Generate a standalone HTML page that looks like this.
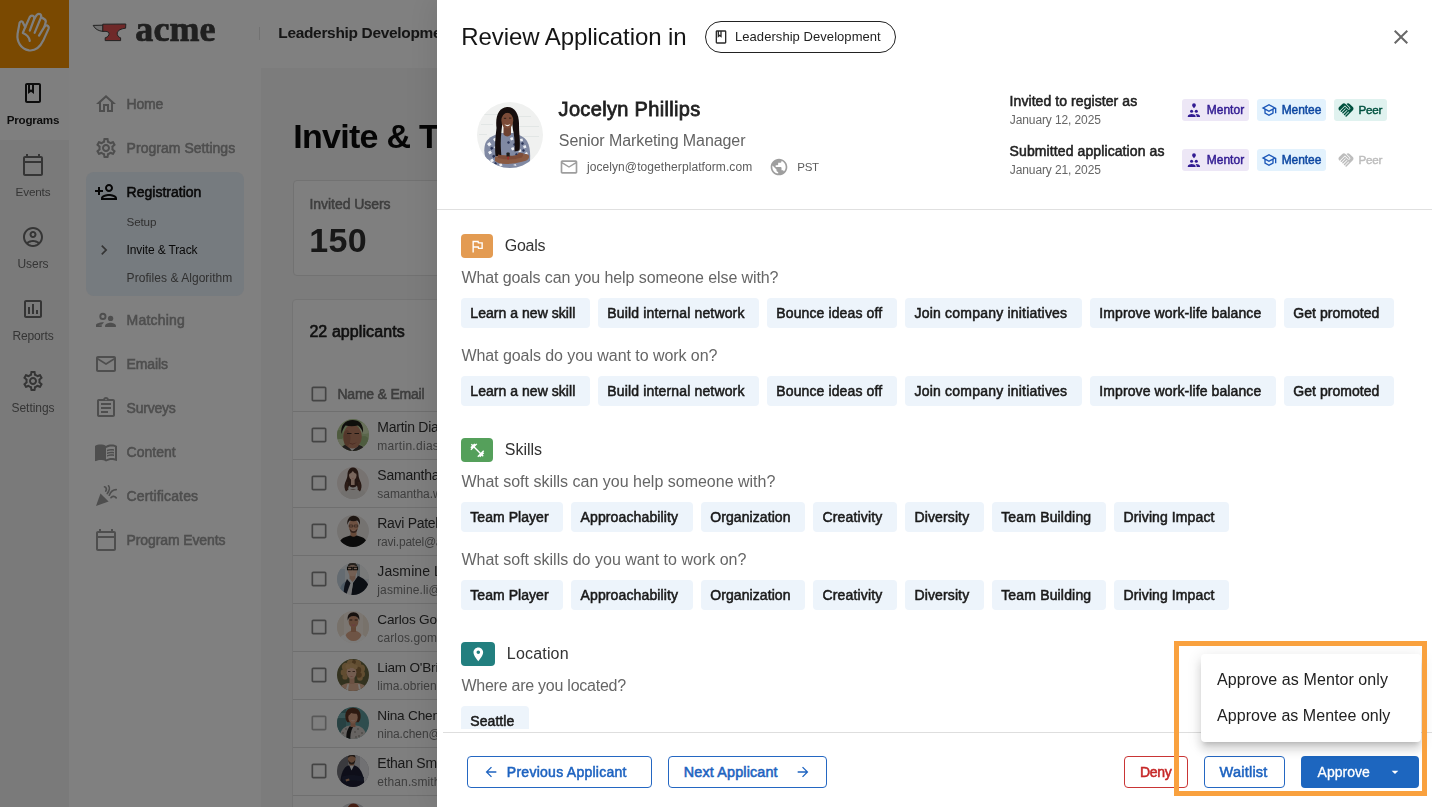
<!DOCTYPE html>
<html lang="en"><head><meta charset="utf-8"><title>Review Application</title>
<style>
html,body{margin:0;padding:0}
body{width:1432px;height:807px;overflow:hidden;position:relative;background:#fff;font-family:"Liberation Sans",sans-serif;-webkit-font-smoothing:antialiased}
.a{position:absolute;display:block;box-sizing:border-box}
.t{position:absolute;white-space:nowrap;display:block}
.m{-webkit-text-stroke:0.038em currentColor}
.b{font-weight:bold}
#app{position:absolute;left:0;top:0;width:1432px;height:807px;overflow:hidden;background:#fff}
#overlay{position:absolute;left:0;top:0;width:1432px;height:807px;background:rgba(0,0,0,.5)}
#modal{position:absolute;left:437px;top:0;width:995px;height:807px;background:#fff;box-shadow:0 0 30px 4px rgba(0,0,0,.09)}
#modal .t,#modal .a{}
.chip{position:absolute;height:30px;border-radius:4px;background:#edf4fb;box-sizing:border-box}
#root{position:absolute;left:0;top:0;width:1432px;height:807px;overflow:hidden;opacity:.999}

</style></head>
<body>
<div id="root">
<div class="a" style="left:260.8px;top:68px;width:1172px;height:739px;background:#f8f8f8;"></div>
<aside id="rail">
<div class="a" style="left:0px;top:0px;width:69px;height:807px;background:#f5f5f5;"></div>
<div class="a" style="left:0px;top:68px;width:69px;height:72px;background:#ffffff;"></div>
<div class="a" style="left:0px;top:0px;width:69px;height:68px;background:#f59300;"></div>
<svg class="a" style="left:0;top:0" width="69" height="68" viewBox="0 0 69 68" fill="none" stroke="#ffffff" stroke-width="2.2" stroke-linecap="round" stroke-linejoin="round"><path d="M25.2 27.2 L22.4 21.6 Q20.6 20.6 19.6 22.8 L17.6 33.6 C16.6 41.4 20.6 49 29 50.4 C36 51.200 40.400 46.400 43.200 40.600 L48.600 28.600 Q49.200 26.200 47.200 25.400 Q45.400 25 44.400 26.800 L39 35.600"/><path d="M25.2 27.200 L29.600 17.400 Q30.800 15.200 32.800 15.800 Q34.800 16.800 34.200 19 L29.800 30.600"/><path d="M34.200 19 L36.400 15.400 Q37.800 13.400 39.800 14 Q41.800 15 41 17.400 L34.600 32.800"/><path d="M41 17.400 Q42.800 18 44.200 19 Q46.400 20.400 45.600 22.600 L44.400 26.800"/><path d="M25.2 27.200 L22.800 33 C26.600 34.400 29.200 37.200 29.800 41"/></svg>
<svg class="a" style="left:21px;top:81px;" width="24" height="24" viewBox="0 0 24 24"><path fill="#1a1a1a" d="M18 2H6c-1.1 0-2 .9-2 2v16c0 1.1.9 2 2 2h12c1.1 0 2-.9 2-2V4c0-1.1-.9-2-2-2zM9 4h2v5l-1-.75L9 9V4zm9 16H6V4h1v9l3-2.25L13 13V4h5v16z"/></svg>
<span id="t1" class="t b" style="left:6.70px;top:114.00px;font-size:11.63px;line-height:11.63px;color:#1a1a1a;letter-spacing:-0.214px;">Programs</span>
<svg class="a" style="left:21px;top:153px;" width="24" height="24" viewBox="0 0 24 24"><path fill="#6a6a6a" d="M20 3h-1V1h-2v2H7V1H5v2H4c-1.1 0-2 .9-2 2v16c0 1.1.9 2 2 2h16c1.1 0 2-.9 2-2V5c0-1.1-.9-2-2-2zm0 18H4V10h16v11zm0-13H4V5h16v3z"/></svg>
<span id="t2" class="t" style="left:15.60px;top:186.00px;font-size:11.69px;line-height:11.69px;color:#6a6a6a;letter-spacing:-0.157px;">Events</span>
<svg class="a" style="left:21px;top:225px;" width="24" height="24" viewBox="0 0 24 24"><path fill="#6a6a6a" d="M12 2C6.48 2 2 6.48 2 12s4.48 10 10 10 10-4.48 10-10S17.52 2 12 2zM7.350 18.500C8.660 17.560 10.260 17 12 17s3.340.56 4.650 1.500c-1.310.94-2.910 1.500-4.650 1.500s-3.340-.56-4.650-1.500zm10.790-1.380C16.450 15.800 14.320 15 12 15s-4.450.8-6.140 2.120C4.700 15.730 4 13.950 4 12c0-4.420 3.580-8 8-8s8 3.580 8 8c0 1.950-.7 3.730-1.860 5.120zM12 6c-1.930 0-3.500 1.570-3.500 3.500S10.070 13 12 13s3.500-1.570 3.500-3.500S13.930 6 12 6zm0 5c-.83 0-1.500-.67-1.500-1.500S11.170 8 12 8s1.500.67 1.500 1.500S12.830 11 12 11z"/></svg>
<span id="t3" class="t" style="left:17.50px;top:258.00px;font-size:12.00px;line-height:12.00px;color:#6a6a6a;letter-spacing:-0.069px;">Users</span>
<svg class="a" style="left:21px;top:297px;" width="24" height="24" viewBox="0 0 24 24"><path fill="#6a6a6a" d="M19 3H5c-1.1 0-2 .9-2 2v14c0 1.1.9 2 2 2h14c1.1 0 2-.9 2-2V5c0-1.1-.9-2-2-2zm0 16H5V5h14v14zM7 10h2v7H7zm4-3h2v10h-2zm4 6h2v4h-2z"/></svg>
<span id="t4" class="t" style="left:12.50px;top:330.00px;font-size:12.00px;line-height:12.00px;color:#6a6a6a;letter-spacing:-0.147px;">Reports</span>
<svg class="a" style="left:21px;top:369px;" width="24" height="24" viewBox="0 0 24 24"><path fill="#6a6a6a" d="M19.43 12.98c.04-.32.07-.64.07-.98 0-.34-.03-.66-.07-.98l2.11-1.65c.19-.15.24-.42.12-.64l-2-3.46c-.09-.16-.26-.25-.44-.25-.06 0-.12.01-.17.03l-2.49 1c-.52-.4-1.08-.73-1.69-.98l-.38-2.65C14.46 2.18 14.25 2 14 2h-4c-.25 0-.46.18-.49.42l-.38 2.65c-.61.25-1.17.59-1.69.98l-2.49-1c-.06-.02-.12-.03-.18-.03-.17 0-.34.09-.43.25l-2 3.46c-.13.22-.07.49.12.64l2.11 1.65c-.04.32-.07.65-.07.98 0 .33.03.66.07.98l-2.11 1.65c-.19.15-.24.42-.12.64l2 3.46c.09.16.26.25.44.25.06 0 .12-.01.17-.03l2.49-1c.52.4 1.08.73 1.69.98l.38 2.65c.03.24.24.42.49.42h4c.25 0 .46-.18.49-.42l.38-2.65c.61-.25 1.17-.59 1.69-.98l2.49 1c.06.02.12.03.18.03.17 0 .34-.09.43-.25l2-3.46c.12-.22.07-.49-.12-.64l-2.11-1.65zm-1.98-1.71c.04.31.05.52.05.73 0 .21-.02.43-.05.73l-.14 1.13.89.7 1.08.84-.7 1.21-1.27-.51-1.04-.42-.9.68c-.43.32-.84.56-1.25.73l-1.06.43-.16 1.13-.2 1.35h-1.4l-.19-1.35-.16-1.13-1.06-.43c-.43-.18-.83-.41-1.23-.71l-.91-.7-1.06.43-1.27.51-.7-1.21 1.08-.84.89-.7-.14-1.13c-.03-.31-.05-.54-.05-.74s.02-.43.05-.73l.14-1.13-.89-.7-1.08-.84.7-1.21 1.27.51 1.04.42.9-.68c.43-.32.84-.56 1.25-.73l1.06-.43.16-1.13.2-1.35h1.39l.19 1.35.16 1.13 1.06.43c.43.18.83.41 1.23.71l.91.7 1.06-.43 1.27-.51.7 1.21-1.07.85-.89.7.14 1.13zM12 8c-2.21 0-4 1.79-4 4s1.79 4 4 4 4-1.79 4-4-1.79-4-4-4zm0 6c-1.1 0-2-.9-2-2s.9-2 2-2 2 .9 2 2-.9 2-2 2z"/></svg>
<span id="t5" class="t" style="left:11.50px;top:402.00px;font-size:12.00px;line-height:12.00px;color:#6a6a6a;letter-spacing:-0.045px;">Settings</span>
</aside>
<header id="topbar">
<svg class="a" style="left:92px;top:22px" width="36" height="20" viewBox="0 0 36 20"><path d="M1.2 3.4 L11 3.200 L11 9.400 C6.500 9 3 7 1.200 3.400 Z" fill="#e2e2e2" stroke="#444" stroke-width="1"/><path d="M10.800 2.200 L33.800 2 L33.600 6.200 C29 6.600 25.600 8.600 25.200 11 C25 13.400 26.400 15.400 28.600 15.800 L28.600 18.600 L13.200 18.600 L13.200 15.800 C16 15.200 17.200 13.200 17 11.200 C16.600 9.400 14 9.200 10.800 9.400 Z" fill="#de5252" stroke="#444" stroke-width="1" stroke-linejoin="round"/></svg>
<span id="t6" class="t b" style="left:135.30px;top:11.00px;font-size:36.00px;line-height:36.00px;color:#404040;letter-spacing:0.087px;font-family:'Liberation Serif',serif;-webkit-text-stroke:0.7px #404040;">acme</span>
<div class="a" style="left:258.5px;top:27px;width:1px;height:13px;background:#e4e4e4;"></div>
<span id="t7" class="t b" style="left:278.30px;top:25.00px;font-size:15.44px;line-height:15.44px;color:#2c2c2c;letter-spacing:-0.302px;">Leadership Development</span>
</header>
<nav id="program-nav">
<svg class="a" style="left:94px;top:92px;" width="24" height="24" viewBox="0 0 24 24"><path fill="#9c9c9c" d="M12 5.69l5 4.5V18h-2v-6H9v6H7v-7.81l5-4.5M12 3L2 12h3v8h6v-6h2v6h6v-8h3L12 3z"/></svg>
<span id="t8" class="t m" style="left:126.60px;top:97.00px;font-size:14.00px;line-height:14.00px;color:#9c9c9c;letter-spacing:-0.240px;">Home</span>
<svg class="a" style="left:94px;top:136px;" width="24" height="24" viewBox="0 0 24 24"><path fill="#9c9c9c" d="M19.43 12.98c.04-.32.07-.64.07-.98 0-.34-.03-.66-.07-.98l2.11-1.65c.19-.15.24-.42.12-.64l-2-3.46c-.09-.16-.26-.25-.44-.25-.06 0-.12.01-.17.03l-2.49 1c-.52-.4-1.08-.73-1.69-.98l-.38-2.65C14.46 2.18 14.25 2 14 2h-4c-.25 0-.46.18-.49.42l-.38 2.65c-.61.25-1.17.59-1.69.98l-2.49-1c-.06-.02-.12-.03-.18-.03-.17 0-.34.09-.43.25l-2 3.46c-.13.22-.07.49.12.64l2.11 1.65c-.04.32-.07.65-.07.98 0 .33.03.66.07.98l-2.11 1.65c-.19.15-.24.42-.12.64l2 3.46c.09.16.26.25.44.25.06 0 .12-.01.17-.03l2.49-1c.52.4 1.08.73 1.69.98l.38 2.65c.03.24.24.42.49.42h4c.25 0 .46-.18.49-.42l.38-2.65c.61-.25 1.17-.59 1.69-.98l2.49 1c.06.02.12.03.18.03.17 0 .34-.09.43-.25l2-3.46c.12-.22.07-.49-.12-.64l-2.11-1.65zm-1.98-1.71c.04.31.05.52.05.73 0 .21-.02.43-.05.73l-.14 1.13.89.7 1.08.84-.7 1.21-1.27-.51-1.04-.42-.9.68c-.43.32-.84.56-1.25.73l-1.06.43-.16 1.13-.2 1.35h-1.4l-.19-1.35-.16-1.13-1.06-.43c-.43-.18-.83-.41-1.23-.71l-.91-.7-1.06.43-1.27.51-.7-1.21 1.08-.84.89-.7-.14-1.13c-.03-.31-.05-.54-.05-.74s.02-.43.05-.73l.14-1.13-.89-.7-1.08-.84.7-1.21 1.27.51 1.04.42.9-.68c.43-.32.84-.56 1.25-.73l1.06-.43.16-1.13.2-1.35h1.39l.19 1.35.16 1.13 1.06.43c.43.18.83.41 1.23.71l.91.7 1.06-.43 1.27-.51.7 1.21-1.07.85-.89.7.14 1.13zM12 8c-2.21 0-4 1.79-4 4s1.79 4 4 4 4-1.79 4-4-1.79-4-4-4zm0 6c-1.1 0-2-.9-2-2s.9-2 2-2 2 .9 2 2-.9 2-2 2z"/></svg>
<span id="t9" class="t m" style="left:126.60px;top:141.00px;font-size:14.00px;line-height:14.00px;color:#9c9c9c;letter-spacing:0.027px;">Program Settings</span>
<div class="a" style="left:86px;top:172px;width:158px;height:124px;background:#edf6fe;border-radius:8px;"></div>
<svg class="a" style="left:94px;top:180px" width="24" height="24" viewBox="0 0 24 24"><g transform="translate(24,0) scale(-1,1)"><path fill="#0c0c0c" d="M13 8c0-2.21-1.79-4-4-4S5 5.79 5 8s1.79 4 4 4 4-1.79 4-4zm-2 0c0 1.1-.9 2-2 2s-2-.9-2-2 .9-2 2-2 2 .9 2 2zM1 18v2h16v-2c0-2.66-5.33-4-8-4s-8 1.34-8 4zm2 0c.2-.71 3.3-2 6-2 2.690 0 5.780 1.280 6 2H3zm17-3v-3h3v-2h-3V7h-2v3h-3v2h3v3h2z"/></g></svg>
<span id="t10" class="t m" style="left:126.60px;top:185.00px;font-size:14.00px;line-height:14.00px;color:#111;letter-spacing:0.008px;">Registration</span>
<span id="t11" class="t" style="left:126.60px;top:216.00px;font-size:11.68px;line-height:11.68px;color:#616161;letter-spacing:-0.166px;">Setup</span>
<svg class="a" style="left:93.7px;top:240.3px;" width="20" height="20" viewBox="0 0 24 24"><path fill="#6a6a6a" d="M10 6L8.590 7.410 13.170 12l-4.580 4.590L10 18l6-6z"/></svg>
<span id="t12" class="t" style="left:126.60px;top:244.00px;font-size:12.00px;line-height:12.00px;color:#111;letter-spacing:-0.136px;">Invite &amp; Track</span>
<span id="t13" class="t" style="left:126.60px;top:272.00px;font-size:12.00px;line-height:12.00px;color:#616161;letter-spacing:0.049px;">Profiles &amp; Algorithm</span>
<svg class="a" style="left:94px;top:308px" width="24" height="24" viewBox="0 0 24 24"><circle cx="8.900" cy="8.400" r="2.600" fill="none" stroke="#9c9c9c" stroke-width="1.900"/><path d="M2 19v-1.900c0-1.700 3.400-2.700 8-2.900l-1.900 2.200c-1.700.200-3 .500-3.600.900h3.400l-.300 1.700z" fill="#9c9c9c"/><circle cx="16.600" cy="10.400" r="2.650" fill="#9c9c9c"/><path d="M11.100 19v-1.300c0-2 3.400-3 5.400-3s5.400 1 5.400 3V19z" fill="#9c9c9c"/></svg>
<span id="t14" class="t m" style="left:126.60px;top:313.00px;font-size:14.00px;line-height:14.00px;color:#9c9c9c;letter-spacing:0.198px;">Matching</span>
<svg class="a" style="left:94px;top:352px;" width="24" height="24" viewBox="0 0 24 24"><path fill="#9c9c9c" d="M20 4H4c-1.1 0-1.99.9-1.99 2L2 18c0 1.1.9 2 2 2h16c1.1 0 2-.9 2-2V6c0-1.1-.9-2-2-2zm0 14H4V8l8 5 8-5v10zm-8-7L4 6h16l-8 5z"/></svg>
<span id="t15" class="t m" style="left:126.60px;top:357.00px;font-size:14.00px;line-height:14.00px;color:#9c9c9c;letter-spacing:-0.119px;">Emails</span>
<svg class="a" style="left:94px;top:396px;" width="24" height="24" viewBox="0 0 24 24"><path fill="#9c9c9c" d="M7 15h7v2H7zm0-4h10v2H7zm0-4h10v2H7zm12-4h-4.18C14.4 1.84 13.3 1 12 1c-1.3 0-2.4.84-2.82 2H5c-.14 0-.27.01-.4.04-.39.08-.74.28-1.01.55-.18.18-.33.4-.43.64-.1.23-.16.49-.16.77v14c0 .27.06.54.16.78s.25.45.43.64c.27.27.62.47 1.01.55.13.02.26.03.4.03h14c1.1 0 2-.9 2-2V5c0-1.1-.9-2-2-2zm-7-.25c.41 0 .75.34.75.75s-.34.75-.75.75-.75-.34-.75-.75.34-.75.75-.75zM19 19H5V5h14v14z"/></svg>
<span id="t16" class="t m" style="left:126.60px;top:401.00px;font-size:14.00px;line-height:14.00px;color:#9c9c9c;letter-spacing:-0.225px;">Surveys</span>
<svg class="a" style="left:94px;top:440px;" width="24" height="24" viewBox="0 0 24 24"><path fill="#9c9c9c" d="M21 5c-1.11-.35-2.33-.5-3.5-.5-1.95 0-4.05.4-5.5 1.5-1.45-1.1-3.55-1.5-5.5-1.5S2.450 4.9 1 6v14.650c0 .25.25.5.5.5.1 0 .15-.05.25-.05C3.1 20.450 5.050 20 6.500 20c1.950 0 4.050.4 5.500 1.500 1.350-.85 3.800-1.500 5.500-1.500 1.650 0 3.350.3 4.750 1.050.1.050.15.050.25.050.25 0 .5-.25.5-.5V6c-.6-.45-1.250-.75-2-1zm0 13.500c-1.1-.35-2.3-.5-3.500-.5-1.700 0-4.150.65-5.500 1.500V8c1.350-.85 3.800-1.500 5.500-1.500 1.200 0 2.400.15 3.500.5v11.500z M17.5 10.500c.88 0 1.730.09 2.500.26V9.240c-.79-.15-1.640-.24-2.500-.24-1.700 0-3.240.29-4.500.83v1.660c1.130-.64 2.700-.99 4.500-.99zM13 12.490v1.660c1.130-.64 2.700-.99 4.500-.99.88 0 1.730.09 2.500.26V11.900c-.79-.15-1.640-.24-2.500-.24-1.700 0-3.240.3-4.500.83zM17.5 14.330c-1.700 0-3.240.29-4.500.83v1.660c1.130-.64 2.700-.99 4.500-.99.88 0 1.730.09 2.500.26v-1.520c-.79-.16-1.640-.24-2.500-.24z"/></svg>
<span id="t17" class="t m" style="left:126.60px;top:445.00px;font-size:14.00px;line-height:14.00px;color:#9c9c9c;letter-spacing:-0.007px;">Content</span>
<svg class="a" style="left:94px;top:484px" width="24" height="24" viewBox="0 0 24 24"><path d="M2 22l12.600-4.500L6.500 9.400z" fill="#9c9c9c"/><g fill="none" stroke="#9c9c9c" stroke-width="1.700" stroke-linecap="round"><path d="M10.500 2.800c1.800.6 2.500 2.600 1.300 4.200"/><path d="M14.500 1.800c1.600 1.800.8 5.200-1.200 7.700"/><path d="M15.300 11.200c1.200-3 3.600-5.600 6.900-5.600"/><path d="M17 13.600c1.600-1.400 3.800-1.300 5.200.3"/></g></svg>
<span id="t18" class="t m" style="left:126.60px;top:489.00px;font-size:14.00px;line-height:14.00px;color:#9c9c9c;letter-spacing:0.131px;">Certificates</span>
<svg class="a" style="left:94px;top:528px;" width="24" height="24" viewBox="0 0 24 24"><path fill="#9c9c9c" d="M20 3h-1V1h-2v2H7V1H5v2H4c-1.1 0-2 .9-2 2v16c0 1.1.9 2 2 2h16c1.1 0 2-.9 2-2V5c0-1.1-.9-2-2-2zm0 18H4V10h16v11zm0-13H4V5h16v3z"/></svg>
<span id="t19" class="t m" style="left:126.60px;top:533.00px;font-size:14.00px;line-height:14.00px;color:#9c9c9c;letter-spacing:-0.120px;">Program Events</span>
</nav>
<main id="content">
<span id="t20" class="t b" style="left:293.30px;top:119.00px;font-size:34.00px;line-height:34.00px;color:#0a0a0a;letter-spacing:-0.722px;">Invite &amp; Track</span>
<div class="a" style="left:293px;top:180px;width:300px;height:96px;background:#fff;border:1px solid #e4e4e4;border-radius:4px;"></div>
<span id="t21" class="t m" style="left:309.50px;top:197.00px;font-size:14.00px;line-height:14.00px;color:#7c7c7c;letter-spacing:-0.054px;">Invited Users</span>
<span id="t22" class="t b" style="left:309.30px;top:223.00px;font-size:34.00px;line-height:34.00px;color:#303030;letter-spacing:0.255px;">150</span>
<div class="a" style="left:292px;top:299px;width:1200px;height:600px;background:#fff;border:1px solid #e9e9e9;border-radius:4px;"></div>
<span id="t23" class="t m" style="left:309.40px;top:324.00px;font-size:16.00px;line-height:16.00px;color:#222;letter-spacing:0.085px;">22 applicants</span>
<svg class="a" style="left:309px;top:384px;" width="20" height="20" viewBox="0 0 24 24"><path fill="#888" d="M19 5v14H5V5h14m0-2H5c-1.1 0-2 .9-2 2v14c0 1.1.9 2 2 2h14c1.1 0 2-.9 2-2V5c0-1.100-.9-2-2-2z"/></svg>
<span id="t24" class="t m" style="left:337.40px;top:387.00px;font-size:14.00px;line-height:14.00px;color:#7c7c7c;letter-spacing:-0.206px;">Name &amp; Email</span>
<svg class="a" width="0" height="0" style="left:0;top:0"><defs><filter id="avbs" x="-10%" y="-10%" width="120%" height="120%"><feGaussianBlur stdDeviation=".35"/></filter></defs></svg>
<div class="a" style="left:293px;top:411px;width:1200px;height:1px;background:#dedede;"></div>
<svg class="a" style="left:309px;top:425px;" width="20" height="20" viewBox="0 0 24 24"><path fill="#888" d="M19 5v14H5V5h14m0-2H5c-1.1 0-2 .9-2 2v14c0 1.1.9 2 2 2h14c1.1 0 2-.9 2-2V5c0-1.100-.9-2-2-2z"/></svg>
<svg class="a" style="left:337px;top:419px" width="32" height="32" viewBox="0 0 32 32"><defs><clipPath id="avc0"><circle cx="16" cy="16" r="16"/></clipPath></defs><g clip-path="url(#avc0)"><rect width="32" height="32" fill="#b7cf98"/><g filter="url(#avbs)"><circle cx="28" cy="9" r="6" fill="#d3e2b6"/><circle cx="27" cy="22" r="5" fill="#9db97e"/><circle cx="2" cy="16" r="5" fill="#9cb47c"/><circle cx="3" cy="24" r="4" fill="#cfdab4"/><path d="M3 34c0-5 3-8 7-9l12 1c4 1 7 4 7 8z" fill="#3f3a38"/><path d="M10 26l5 6 6-5z" fill="#e8e4e0"/><ellipse cx="15.500" cy="17.500" rx="9.300" ry="12" fill="#bd8165"/><ellipse cx="10" cy="19" rx="3.500" ry="8" fill="#a76e55"/><path d="M4.500 15c-1.500-9 4-14 11-14s11.500 4.500 10.500 13c-1.500-4.500-3.500-6.500-5-7.500c-4 1-9 1-12.500 0c-1.500 2-3 4.500-4 8.500z" fill="#1f1b19"/><path d="M10 14.500h4.500M17.500 14.500h4.500" stroke="#3a2a22" stroke-width="1.200"/><path d="M11.500 23.500q4.500 2.500 8.500-.500q-4 4.500-8.500 .500z" fill="#8a4a3c"/></g></g></svg>
<span id="t25" class="t" style="left:377.30px;top:420.00px;font-size:14.00px;line-height:14.00px;color:#333;letter-spacing:-0.255px;">Martin Dias</span>
<span id="t26" class="t" style="left:377.30px;top:440.00px;font-size:12.00px;line-height:12.00px;color:#7c7c7c;letter-spacing:0.289px;">martin.dias@acme.com</span>
<div class="a" style="left:293px;top:459px;width:1200px;height:1px;background:#dedede;"></div>
<svg class="a" style="left:309px;top:473px;" width="20" height="20" viewBox="0 0 24 24"><path fill="#888" d="M19 5v14H5V5h14m0-2H5c-1.1 0-2 .9-2 2v14c0 1.1.9 2 2 2h14c1.1 0 2-.9 2-2V5c0-1.100-.9-2-2-2z"/></svg>
<svg class="a" style="left:337px;top:467px" width="32" height="32" viewBox="0 0 32 32"><defs><clipPath id="avc1"><circle cx="16" cy="16" r="16"/></clipPath></defs><g clip-path="url(#avc1)"><rect width="32" height="32" fill="#efe6e2"/><g filter="url(#avbs)"><path d="M2 34c0-9 4-14 14-14s14 5 14 14z" fill="#e4e0dc"/><path d="M10.500 8c0-5 2.500-7.500 5.500-7.500s5.500 2.500 5.500 7.500c0 3 1.500 5 2.500 8c1 3 .500 6-1 8.500c-1.500-1-2-2.500-2.500-4c-1 1.500-2.500 2.500-4.500 2.500s-3.500-1-4.500-2.500c-.500 1.500-1 3-2.500 4c-1.500-2.500-2-5.500-1-8.500c1-3 2.500-5 2.500-8z" fill="#4a2f25"/><rect x="14" y="12" width="3.600" height="6" fill="#e9c3ad"/><path d="M12 18.500c2 2.500 6 2.500 8 0l1 4h-10z" fill="#e4e0dc"/><ellipse cx="15.800" cy="8.300" rx="3.700" ry="4.900" fill="#f1cdb9"/><path d="M12 7c.300-3.500 1.800-5 3.800-5s3.600 1.500 3.900 5c-1.500-.500-2.800-1.500-3.900-3c-1 1.500-2.300 2.500-3.800 3z" fill="#4a2f25"/><path d="M14.300 10.700q1.500 .900 3 0q-1.500 1.600-3 0z" fill="#c8504e"/><path d="M9 15c-1 3-1 6 0 9l2.500-1.500c-.800-2.500-.800-5 0-7.500zM23 15c1 3 1 6 0 9l-2.500-1.500c.800-2.500 .800-5 0-7.500z" fill="#5a3a2e"/></g></g></svg>
<span id="t27" class="t" style="left:377.30px;top:468.00px;font-size:14.00px;line-height:14.00px;color:#333;letter-spacing:-0.213px;">Samantha Wells</span>
<span id="t28" class="t" style="left:377.30px;top:488.00px;font-size:12.00px;line-height:12.00px;color:#7c7c7c;letter-spacing:-0.040px;">samantha.wells@acme.com</span>
<div class="a" style="left:293px;top:507px;width:1200px;height:1px;background:#dedede;"></div>
<svg class="a" style="left:309px;top:521px;" width="20" height="20" viewBox="0 0 24 24"><path fill="#888" d="M19 5v14H5V5h14m0-2H5c-1.1 0-2 .9-2 2v14c0 1.1.9 2 2 2h14c1.1 0 2-.9 2-2V5c0-1.100-.9-2-2-2z"/></svg>
<svg class="a" style="left:337px;top:515px" width="32" height="32" viewBox="0 0 32 32"><defs><clipPath id="avc2"><circle cx="16" cy="16" r="16"/></clipPath></defs><g clip-path="url(#avc2)"><rect width="32" height="32" fill="#ebe6e3"/><g filter="url(#avbs)"><path d="M1 34c0-7 3-11 9-12.500l5-1.500h3l5 1.500c6 1.500 8 5.500 8 12.500z" fill="#141414"/><path d="M13.500 15h6v5.500c-2 1.800-4 1.800-6 0z" fill="#cf9473"/><ellipse cx="16.500" cy="11" rx="4.900" ry="6.400" fill="#dca283"/><path d="M10.500 10c-1-5.500 2-9 6-9.300c4.500 0 7.500 3.500 6.300 9.300c-.800-2.500-1.500-3.800-2.500-4.500c-2.500 1-5.500 1-7.500 0c-1 .700-1.700 2-2.300 4.500z" fill="#3a2a22"/><path d="M12.300 10h3.400v2h-3.400zM17.300 10h3.400v2h-3.400z" fill="none" stroke="#4a372d" stroke-width=".600"/><path d="M12.500 13.500q4 5.500 8 0q-.500 4.500-4 4.500t-4-4.500z" fill="#6a4a3c"/><path d="M14.500 14.800q2 1.200 4 0q-2 2-4 0z" fill="#f2e8e4"/></g></g></svg>
<span id="t29" class="t" style="left:377.30px;top:516.00px;font-size:14.00px;line-height:14.00px;color:#333;letter-spacing:-0.305px;">Ravi Patel</span>
<span id="t30" class="t" style="left:377.30px;top:536.00px;font-size:12.00px;line-height:12.00px;color:#7c7c7c;letter-spacing:-0.209px;">ravi.patel@acme.com</span>
<div class="a" style="left:293px;top:555px;width:1200px;height:1px;background:#dedede;"></div>
<svg class="a" style="left:309px;top:569px;" width="20" height="20" viewBox="0 0 24 24"><path fill="#888" d="M19 5v14H5V5h14m0-2H5c-1.1 0-2 .9-2 2v14c0 1.1.9 2 2 2h14c1.1 0 2-.9 2-2V5c0-1.100-.9-2-2-2z"/></svg>
<svg class="a" style="left:337px;top:563px" width="32" height="32" viewBox="0 0 32 32"><defs><clipPath id="avc3"><circle cx="16" cy="16" r="16"/></clipPath></defs><g clip-path="url(#avc3)"><rect width="32" height="32" fill="#e3e8ec"/><g filter="url(#avbs)"><rect x="0" y="6" width="8" height="26" fill="#c8d6e2"/><rect x="22" y="2" width="10" height="14" fill="#f2f4f5"/><rect x="20" y="0" width="3" height="14" fill="#b4c0c8"/><path d="M2 34c0-8 2-14 8-16l4 16z" fill="#9fb6cc"/><path d="M14 34l2-14 5-7c5 2 10 5 11 12v9z" fill="#161a26"/><path d="M10.500 16l5.500 4-2.500 14h-5z" fill="#e9eaec"/><path d="M10 16l3.500 4-5 14h-2c0-8 1-14 3.500-18z" fill="#1d2230"/><path d="M12.500 10h6v5.500l-3 3.500-3-3.500z" fill="#d5a78f"/><ellipse cx="15.500" cy="7" rx="4.800" ry="6.300" fill="#e6bfa8"/><path d="M10.500 4c.500-3.500 2.500-4.800 5-4.800s4.500 1.300 5 4.800c-1.500-1.200-3-1.800-5-1.800s-3.500 .600-5 1.800z" fill="#4a4038"/><path d="M10.500 4.300h4.300v2.500h-4.300zM16.200 4.300h4.300v2.500h-4.300z" fill="none" stroke="#15120f" stroke-width="1.100"/></g></g></svg>
<span id="t31" class="t" style="left:377.30px;top:564.00px;font-size:14.00px;line-height:14.00px;color:#333;letter-spacing:0.097px;">Jasmine Li</span>
<span id="t32" class="t" style="left:377.30px;top:584.00px;font-size:12.00px;line-height:12.00px;color:#7c7c7c;letter-spacing:0.122px;">jasmine.li@acme.com</span>
<div class="a" style="left:293px;top:603px;width:1200px;height:1px;background:#dedede;"></div>
<svg class="a" style="left:309px;top:617px;" width="20" height="20" viewBox="0 0 24 24"><path fill="#888" d="M19 5v14H5V5h14m0-2H5c-1.1 0-2 .9-2 2v14c0 1.1.9 2 2 2h14c1.1 0 2-.9 2-2V5c0-1.100-.9-2-2-2z"/></svg>
<svg class="a" style="left:337px;top:611px" width="32" height="32" viewBox="0 0 32 32"><defs><clipPath id="avc4"><circle cx="16" cy="16" r="16"/></clipPath></defs><g clip-path="url(#avc4)"><rect width="32" height="32" fill="#f6ece2"/><g filter="url(#avbs)"><rect x="0" y="0" width="7" height="32" fill="#efe2d4"/><rect x="26" y="0" width="6" height="32" fill="#f1e4d6"/><path d="M1 34c0-6 3-10 8-11h14c5 1 8 5 8 11z" fill="#fbfaf9"/><path d="M8.500 24c2-3 4.500-4.500 8-4.500s6 1.500 8 4.500c-1.500 4-4.500 6-8 6s-6.500-2-8-6z" fill="#dca98a"/><rect x="14" y="14" width="5" height="7" fill="#c98f6e"/><ellipse cx="16.500" cy="10.500" rx="4.900" ry="6.300" fill="#cd9373"/><path d="M10.800 9.500c-1-5.500 2-8.300 5.700-8.300s6.700 2.800 5.700 8.300c-.800-2.800-2.500-4.500-5.700-4.500s-4.900 1.700-5.700 4.500z" fill="#2e221e"/><path d="M14.200 13.300q2.300 1.500 4.600 0q-2.300 2.600-4.600 0z" fill="#d94f9a"/><path d="M12.500 9h2.800M17.700 9h2.800" stroke="#3a2820" stroke-width=".900"/></g></g></svg>
<span id="t33" class="t" style="left:377.30px;top:613.00px;font-size:13.64px;line-height:13.64px;color:#333;letter-spacing:-0.191px;">Carlos Gomez</span>
<span id="t34" class="t" style="left:377.30px;top:632.00px;font-size:12.00px;line-height:12.00px;color:#7c7c7c;letter-spacing:0.125px;">carlos.gomez@acme.com</span>
<div class="a" style="left:293px;top:651px;width:1200px;height:1px;background:#dedede;"></div>
<svg class="a" style="left:309px;top:665px;" width="20" height="20" viewBox="0 0 24 24"><path fill="#888" d="M19 5v14H5V5h14m0-2H5c-1.1 0-2 .9-2 2v14c0 1.1.9 2 2 2h14c1.1 0 2-.9 2-2V5c0-1.100-.9-2-2-2z"/></svg>
<svg class="a" style="left:337px;top:659px" width="32" height="32" viewBox="0 0 32 32"><defs><clipPath id="avc5"><circle cx="16" cy="16" r="16"/></clipPath></defs><g clip-path="url(#avc5)"><rect width="32" height="32" fill="#66653e"/><g filter="url(#avbs)"><path d="M1 34c0-6 4-9 10-10h10c6 1 10 4 10 10z" fill="#e2b497"/><path d="M8 34l2.500-9 1.500 .300-1.500 8.700zM25 34l-2.500-9-1.500 .300 1.500 8.700z" fill="#f2ede6"/><rect x="12.500" y="18" width="5" height="7" fill="#d6a385"/><g fill="#c39a62"><circle cx="9" cy="8" r="4.200"/><circle cx="14" cy="4.500" r="4.200"/><circle cx="20" cy="5" r="4.200"/><circle cx="24" cy="9.500" r="4"/><circle cx="24.500" cy="15" r="3.500"/><circle cx="7" cy="13.500" r="3.300"/><circle cx="8" cy="18" r="2.600"/><circle cx="23" cy="19" r="2.800"/></g><g fill="#8f6a3e"><circle cx="21" cy="11" r="3.200"/><circle cx="22" cy="16" r="2.800"/><circle cx="17" cy="3" r="2"/></g><ellipse cx="14.500" cy="13.500" rx="4.900" ry="6.300" fill="#e6b99e"/><g fill="#d0a66e"><circle cx="11" cy="7.500" r="2.600"/><circle cx="15" cy="6.500" r="2.600"/><circle cx="18.500" cy="8" r="2.300"/></g><path d="M12.500 17q2 1.200 4 0q-2 2-4 0z" fill="#c45a5a"/><path d="M11 12.500h2.500M15.500 12.500h2.500" stroke="#5a4030" stroke-width=".900"/></g></g></svg>
<span id="t35" class="t" style="left:377.30px;top:661.00px;font-size:13.58px;line-height:13.58px;color:#333;letter-spacing:-0.201px;">Liam O&#x27;Brien</span>
<span id="t36" class="t" style="left:377.30px;top:680.00px;font-size:12.00px;line-height:12.00px;color:#7c7c7c;letter-spacing:0.075px;">lima.obrien@acme.com</span>
<div class="a" style="left:293px;top:699px;width:1200px;height:1px;background:#dedede;"></div>
<svg class="a" style="left:309px;top:713px;" width="20" height="20" viewBox="0 0 24 24"><path fill="#b0b0b0" d="M19 5v14H5V5h14m0-2H5c-1.1 0-2 .9-2 2v14c0 1.1.9 2 2 2h14c1.1 0 2-.9 2-2V5c0-1.100-.9-2-2-2z"/></svg>
<svg class="a" style="left:337px;top:707px" width="32" height="32" viewBox="0 0 32 32"><defs><clipPath id="avc6"><circle cx="16" cy="16" r="16"/></clipPath></defs><g clip-path="url(#avc6)"><rect width="32" height="32" fill="#5f9a9c"/><g filter="url(#avbs)"><rect x="0" y="0" width="9" height="32" fill="#4f8284"/><rect x="0" y="6" width="12" height="5" fill="#6fa9aa"/><path d="M2 34c0-8 3-13 8-15l6-1 6 1c5 2 8 7 8 15z" fill="#cfc9c5"/><path d="M9.500 34c-.500-6 0-11 3.500-15l3 1c-2.500 5-3 9-2.500 14z" fill="#1c1c1e"/><g fill="#9d9791"><circle cx="6" cy="26" r="1"/><circle cx="9" cy="22" r=".900"/><circle cx="21" cy="22" r="1"/><circle cx="25" cy="26" r="1"/><circle cx="22" cy="29" r="1"/><circle cx="18" cy="25" r=".900"/><circle cx="26" cy="30" r=".900"/><circle cx="5" cy="30" r=".900"/><circle cx="19" cy="30" r=".900"/></g><rect x="13.500" y="14" width="5" height="6" fill="#c98f72"/><path d="M8.500 11c-1-6.500 2.500-10.300 7.500-10.300s8.500 3.800 7.500 10.300c-.300 2-1 3.500-2 4.300h-11c-1-.800-1.700-2.300-2-4.300z" fill="#5c3424"/><ellipse cx="16" cy="10.500" rx="4.700" ry="6" fill="#dba385"/><path d="M11.300 9c.500-3.500 2.300-5 4.700-5c1.500 0 3 .500 4.700 2.500c-2.500 .500-5 .300-6.500-.500c-.800 1-1.800 2-2.900 3z" fill="#5c3424"/><path d="M13.800 13q2.200 1.500 4.400 0q-2.200 2.500-4.400 0z" fill="#f2e6e0"/></g></g></svg>
<span id="t37" class="t" style="left:377.30px;top:709.00px;font-size:13.61px;line-height:13.61px;color:#333;letter-spacing:-0.206px;">Nina Chen</span>
<span id="t38" class="t" style="left:377.30px;top:728.00px;font-size:12.00px;line-height:12.00px;color:#7c7c7c;letter-spacing:-0.095px;">nina.chen@acme.com</span>
<div class="a" style="left:293px;top:747px;width:1200px;height:1px;background:#dedede;"></div>
<svg class="a" style="left:309px;top:761px;" width="20" height="20" viewBox="0 0 24 24"><path fill="#888" d="M19 5v14H5V5h14m0-2H5c-1.1 0-2 .9-2 2v14c0 1.1.9 2 2 2h14c1.1 0 2-.9 2-2V5c0-1.100-.9-2-2-2z"/></svg>
<svg class="a" style="left:337px;top:755px" width="32" height="32" viewBox="0 0 32 32"><defs><clipPath id="avc7"><circle cx="16" cy="16" r="16"/></clipPath></defs><g clip-path="url(#avc7)"><rect width="32" height="32" fill="#a8a8ae"/><g filter="url(#avbs)"><rect x="0" y="0" width="11" height="32" fill="#74747c"/><rect x="22" y="0" width="10" height="32" fill="#e2e2e6"/><rect x="18" y="0" width="5" height="32" fill="#c4c4ca"/><path d="M3 34c0-12 2-20 7-23l4.500-1.500 4.500 1.500c6 3 8.500 11 8.500 23z" fill="#1b1f33"/><path d="M12 9.500l2.500 6 3-6z" fill="#e8e8ea"/><path d="M5 22c4-2.500 14-2.500 22 0l-1 5c-7-2.500-14-2.500-20 0z" fill="#232840"/><path d="M8.500 24.500l3.500-1 .600 2-3.500 1z" fill="#b98a6c"/><rect x="12.500" y="6" width="4.500" height="4.500" fill="#b07c5e"/><ellipse cx="14.700" cy="4" rx="3.900" ry="4.900" fill="#c08c6c"/><path d="M10.800 3c.300-3 1.800-4.300 3.900-4.300s3.600 1.300 3.900 4.300c-1-1.200-2.300-1.700-3.900-1.700s-2.900 .500-3.900 1.700z" fill="#3a2e28"/><path d="M11.200 5q3.500 5.500 7 0q-.300 4.500-3.500 4.500t-3.500-4.500z" fill="#3f3029"/></g></g></svg>
<span id="t39" class="t" style="left:377.30px;top:756.00px;font-size:14.00px;line-height:14.00px;color:#333;letter-spacing:-0.235px;">Ethan Smith</span>
<span id="t40" class="t" style="left:377.30px;top:776.00px;font-size:12.00px;line-height:12.00px;color:#7c7c7c;letter-spacing:0.110px;">ethan.smith@acme.com</span>
<div class="a" style="left:293px;top:795px;width:1200px;height:1px;background:#dedede;"></div>
<svg class="a" style="left:309px;top:809px;" width="20" height="20" viewBox="0 0 24 24"><path fill="#888" d="M19 5v14H5V5h14m0-2H5c-1.1 0-2 .9-2 2v14c0 1.1.9 2 2 2h14c1.1 0 2-.9 2-2V5c0-1.100-.9-2-2-2z"/></svg>
<svg class="a" style="left:337px;top:803px" width="32" height="32" viewBox="0 0 32 32"><defs><clipPath id="avc8"><circle cx="16" cy="16" r="16"/></clipPath></defs><g clip-path="url(#avc8)"><rect width="32" height="32" fill="#cfcfd3"/><g filter="url(#avbs)"><path d="M9 14c0-9 3-13.500 7.500-13.500s7.500 4.500 7.500 13.500z" fill="#8a3d26"/><ellipse cx="16.500" cy="12" rx="4.500" ry="6" fill="#e0b79c"/></g></g></svg>
<span id="t41" class="t" style="left:377.30px;top:805.00px;font-size:13.54px;line-height:13.54px;color:#333;letter-spacing:-0.216px;">Christina Wu</span>
<span id="t42" class="t" style="left:377.30px;top:824.00px;font-size:12.00px;line-height:12.00px;color:#7c7c7c;letter-spacing:-0.125px;">christina.wu@acme.com</span>
</main>
<div id="overlay"></div>
<section id="review-dialog" role="dialog" aria-label="Review Application">
<div id="modal"></div>
<span id="t43" class="t" style="left:461.30px;top:25.00px;font-size:24.00px;line-height:24.00px;color:#151515;letter-spacing:-0.071px;">Review Application in</span>
<div class="a" style="left:705px;top:21px;width:191px;height:32px;background:#fff;border:1px solid #222;border-radius:16px;"></div>
<svg class="a" style="left:713px;top:29.1px;" width="16" height="16" viewBox="0 0 24 24"><path fill="#2a2a2a" d="M18 2H6c-1.1 0-2 .9-2 2v16c0 1.1.9 2 2 2h12c1.1 0 2-.9 2-2V4c0-1.1-.9-2-2-2zM9 4h2v5l-1-.75L9 9V4zm9 16H6V4h1v9l3-2.25L13 13V4h5v16z"/></svg>
<span id="t44" class="t" style="left:735.00px;top:30.00px;font-size:13.00px;line-height:13.00px;color:#222;letter-spacing:0.057px;">Leadership Development</span>
<svg class="a" style="left:1389px;top:25.1px;" width="24" height="24" viewBox="0 0 24 24"><path fill="#686868" d="M19 6.41L17.59 5 12 10.59 6.41 5 5 6.41 10.59 12 5 17.59 6.41 19 12 13.41 17.59 19 19 17.59 13.41 12z"/></svg>
<svg class="a" style="left:476.6px;top:102.3px" width="66" height="66" viewBox="0 0 66 66"><defs><clipPath id="avcj"><circle cx="33" cy="33" r="33"/></clipPath><filter id="avbl" x="-5%" y="-5%" width="110%" height="110%"><feGaussianBlur stdDeviation=".45"/></filter></defs><g clip-path="url(#avcj)"><rect width="66" height="66" fill="#f0f1f0"/><g filter="url(#avbl)"><g fill="#dfe4e3"><rect x="6" y="12" width="16" height=".8"/><rect x="4" y="22" width="12" height=".8"/><rect x="42" y="24" width="20" height=".8"/><rect x="44" y="34" width="18" height=".8"/><rect x="40" y="14" width="14" height=".8"/><rect x="2" y="32" width="8" height=".8"/></g><path d="M12 66C7 56 6 46 9 40c3-5 9-7.500 15-9l12 0c6 1.500 11 3.500 14 8c3 5 3.500 12 3 20l-3 7z" fill="#8089a3"/><g fill="#eef1f6"><path d="M10 42l2.500-2 2 2.500-2.500 2zM16 37l2.500-1.500 1.500 2.500-2.500 1.500zM11 50l2.500-1.500 1.500 2.500-2.500 1.500zM17 45l2.500-1.500 1.500 2.500-2.500 1.500zM13 58l2.500-1.500 1.500 2.500-2.500 1.500zM19 53l2-1.500 1.500 2.500-2 1.500zM33 36l2.500-1 1 2.500-2.500 1zM38 40l2.500-1 1 2.500-2.500 1zM43 37l2.500-.500 .500 2.500-2.500 .500zM46 44l2.500-1 1 2.500-2.500 1zM34 46l2.500-1 1 2.500-2.500 1zM41 48l2.500-1 1 2.500-2.500 1zM48 51l2-1 1 2.500-2 1zM22 62l2.500-1 1 2.500-2.500 1zM36 63l2.500-1 1 2z"/></g><g fill="#2c3658"><path d="M13 46l2-1.500 1.500 2-2 1.500zM19 41l2-1.500 1.500 2-2 1.500zM15 54l2-1.500 1.500 2-2 1.500zM36 42l2-1 1 2-2 1zM44 41l2-1 1 2-2 1zM38 52l2-1 1 2-2 1zM45 48l2-1 1 2-2 1zM30 40l2-1 1 2-2 1zM17 61l2-1 1 2-2 1z"/></g><path d="M19.500 26c-1.500-12 2.500-20.500 10.500-21c8-.500 12.500 7.500 12 18.500c0 8 1.500 16 .500 25l-5 1c.500-8 0-15-1.500-21.500l-1-8l-9.500 0l-1 9c-1 8-1 16 0 26l-6-1c-1-10 0-19 1-28z" fill="#17110f"/><path d="M26.500 23h7.500v9.500c-2.500 2.500-5 2.500-7.500 0z" fill="#6e4331"/><ellipse cx="30.300" cy="18.600" rx="5.900" ry="7.900" fill="#7c4c37"/><path d="M24.300 15c1-5 3.500-7 6.500-7s5 2 5.700 6c-2-2.500-4-3.500-6.200-3.500s-4.200 1.500-6 4.500z" fill="#17110f"/><path d="M27.300 22.300q3.200 1.600 6.200-.300q-2.600 4.200-6.200 .300z" fill="#f6efec"/><path d="M26.800 16.300h2.400M32 16.100h2.400" stroke="#2a1a14" stroke-width=".9"/><path d="M18 55c6-2.500 14-2 20 0l10-3c3-.500 4.500 1 4 3.500c-.500 2-2 3-4 3.500c-7 2-13 3-19 3c-5 0-9-1-11-3z" fill="#8a5a42"/><path d="M21 52.500c5 1.500 12 2 19 .500l2-2.500 5 1-2 4c-8 2.500-17 2.500-24 .500z" fill="#7c4c37"/><rect x="29.500" y="50.500" width="3.200" height="4.200" rx=".8" fill="#1d1a1a"/><rect x="30.200" y="54.500" width="1.800" height="3" fill="#9c2f2a"/></g></g></svg>
<span id="t45" class="t m" style="left:558.60px;top:99.00px;font-size:20.00px;line-height:20.00px;color:#1f1f1f;letter-spacing:0.329px;">Jocelyn Phillips</span>
<span id="t46" class="t" style="left:558.80px;top:133.00px;font-size:16.00px;line-height:16.00px;color:#636363;letter-spacing:-0.081px;">Senior Marketing Manager</span>
<svg class="a" style="left:559px;top:157.3px;" width="20" height="20" viewBox="0 0 24 24"><path fill="#9e9e9e" d="M20 4H4c-1.1 0-1.99.9-1.99 2L2 18c0 1.1.9 2 2 2h16c1.1 0 2-.9 2-2V6c0-1.1-.9-2-2-2zm0 14H4V8l8 5 8-5v10zm-8-7L4 6h16l-8 5z"/></svg>
<span id="t47" class="t" style="left:586.90px;top:161.00px;font-size:12.00px;line-height:12.00px;color:#5c5c5c;letter-spacing:0.089px;">jocelyn@togetherplatform.com</span>
<svg class="a" style="left:769px;top:157.2px;" width="20" height="20" viewBox="0 0 24 24"><path fill="#9e9e9e" d="M12 2C6.48 2 2 6.48 2 12s4.48 10 10 10 10-4.48 10-10S17.52 2 12 2zm-1 17.930c-3.950-.49-7-3.850-7-7.930 0-.62.08-1.210.21-1.790L9 15v1c0 1.1.9 2 2 2v1.930zm6.900-2.540c-.26-.81-1-1.390-1.900-1.390h-1v-3c0-.55-.45-1-1-1H8v-2h2c.55 0 1-.45 1-1V7h2c1.1 0 2-.9 2-2v-.41c2.930 1.190 5 4.060 5 7.410 0 2.080-.8 3.970-2.100 5.390z"/></svg>
<span id="t48" class="t" style="left:797.30px;top:162.00px;font-size:11.53px;line-height:11.53px;color:#5c5c5c;letter-spacing:-0.307px;">PST</span>
<span id="t49" class="t m" style="left:1009.60px;top:94.00px;font-size:14.00px;line-height:14.00px;color:#222;letter-spacing:0.070px;">Invited to register as</span>
<span id="t50" class="t" style="left:1009.80px;top:114.00px;font-size:12.00px;line-height:12.00px;color:#666;letter-spacing:-0.109px;">January 12, 2025</span>
<span id="t51" class="t m" style="left:1009.60px;top:144.00px;font-size:14.00px;line-height:14.00px;color:#222;letter-spacing:0.102px;">Submitted application as</span>
<span id="t52" class="t" style="left:1009.80px;top:164.00px;font-size:12.00px;line-height:12.00px;color:#666;letter-spacing:-0.109px;">January 21, 2025</span>
<div class="a" style="left:1182px;top:99px;width:67px;height:22px;background:#ede7f6;border-radius:3px;"></div>
<svg class="a" style="left:1186px;top:102px" width="16" height="16" viewBox="0 0 16 16" fill="#311b92"><path d="M8 1.300a1.900 1.900 0 0 1 1.900 1.900c0 1.200-1.100 1.900-1.900 3.100C7.200 5.100 6.100 4.400 6.100 3.200A1.900 1.900 0 0 1 8 1.300z"/><circle cx="5.600" cy="9.200" r="1.550"/><circle cx="10.300" cy="9.200" r="1.550"/><path d="M1.800 15v-.9c0-1.500 2.500-2.200 3.900-2.200s3.900.7 3.900 2.200V15z"/><path d="M10.600 15v-.9c0-.8-.4-1.400-1-1.900c.3-.1.500-.1.700-.1c1.400 0 3.700.7 3.700 2.100V15z"/></svg>
<span id="t53" class="t m" style="left:1206.70px;top:104.00px;font-size:12.00px;line-height:12.00px;color:#311b92;letter-spacing:0.023px;">Mentor</span>
<div class="a" style="left:1257px;top:99px;width:69px;height:22px;background:#e3f2fd;border-radius:3px;"></div>
<svg class="a" style="left:1261.2px;top:102px;" width="16" height="16" viewBox="0 0 24 24"><path fill="#1a56b8" d="M12 3L1 9l4 2.180v6L12 21l7-3.820v-6l2-1.090V17h2V9L12 3zm6.820 6L12 12.720 5.180 9 12 5.280 18.820 9zM17 15.990l-5 2.730-5-2.730v-3.720L12 15l5-2.730v3.720z"/></svg>
<span id="t54" class="t m" style="left:1281.70px;top:104.00px;font-size:12.00px;line-height:12.00px;color:#0d47a1;letter-spacing:-0.072px;">Mentee</span>
<div class="a" style="left:1334px;top:99px;width:53px;height:22px;background:#e0f2ef;border-radius:3px;"></div>
<svg class="a" style="left:1337px;top:100.5px" width="18" height="18" viewBox="0 0 24 24"><path fill="#00513f" d="M16.48 10.410c-.39.39-1.040.39-1.430 0l-4.470-4.460-7.050 7.040-.66-.63c-1.170-1.170-1.170-3.070 0-4.240l4.240-4.240c1.170-1.170 3.070-1.170 4.240 0L16.480 9c.39.39.39 1.020 0 1.410zm.7-2.120c.78.78.78 2.050 0 2.830-1.270 1.270-2.610.22-2.830 0l-3.760-3.760-5.570 5.570c-.39.39-.39 1.020 0 1.410.39.39 1.020.39 1.420 0l4.620-4.620.71.710-4.620 4.620c-.39.39-.39 1.020 0 1.410.39.39 1.020.39 1.420 0l4.620-4.620.71.710-4.620 4.620c-.39.390-.39 1.020 0 1.410.39.39 1.020.39 1.410 0l4.620-4.620.71.710-4.620 4.620c-.39.39-.39 1.020 0 1.410.39.39 1.020.39 1.410 0l8.320-8.300c1.170-1.170 1.170-3.070 0-4.240l-4.240-4.240c-1.150-1.150-3.010-1.170-4.180-.06l4.470 4.470z"/></svg>
<span id="t55" class="t m" style="left:1358.40px;top:104.00px;font-size:11.65px;line-height:11.65px;color:#00513f;letter-spacing:-0.182px;">Peer</span>
<div class="a" style="left:1182px;top:149px;width:67px;height:22px;background:#ede7f6;border-radius:3px;"></div>
<svg class="a" style="left:1186px;top:152px" width="16" height="16" viewBox="0 0 16 16" fill="#311b92"><path d="M8 1.300a1.900 1.900 0 0 1 1.900 1.900c0 1.200-1.100 1.900-1.900 3.100C7.200 5.100 6.100 4.400 6.100 3.200A1.900 1.900 0 0 1 8 1.300z"/><circle cx="5.600" cy="9.200" r="1.550"/><circle cx="10.300" cy="9.200" r="1.550"/><path d="M1.800 15v-.9c0-1.500 2.500-2.200 3.900-2.200s3.900.7 3.900 2.200V15z"/><path d="M10.600 15v-.9c0-.8-.4-1.400-1-1.900c.3-.1.500-.1.700-.1c1.400 0 3.700.7 3.700 2.100V15z"/></svg>
<span id="t56" class="t m" style="left:1206.70px;top:154.00px;font-size:12.00px;line-height:12.00px;color:#311b92;letter-spacing:0.023px;">Mentor</span>
<div class="a" style="left:1257px;top:149px;width:69px;height:22px;background:#e3f2fd;border-radius:3px;"></div>
<svg class="a" style="left:1261.2px;top:152px;" width="16" height="16" viewBox="0 0 24 24"><path fill="#1a56b8" d="M12 3L1 9l4 2.180v6L12 21l7-3.820v-6l2-1.090V17h2V9L12 3zm6.820 6L12 12.720 5.180 9 12 5.280 18.820 9zM17 15.990l-5 2.730-5-2.730v-3.720L12 15l5-2.730v3.720z"/></svg>
<span id="t57" class="t m" style="left:1281.70px;top:154.00px;font-size:12.00px;line-height:12.00px;color:#0d47a1;letter-spacing:-0.072px;">Mentee</span>
<svg class="a" style="left:1337px;top:150.5px" width="18" height="18" viewBox="0 0 24 24"><path fill="#bdbdbd" d="M16.48 10.410c-.39.39-1.040.39-1.430 0l-4.470-4.460-7.050 7.040-.66-.63c-1.170-1.170-1.170-3.070 0-4.240l4.240-4.240c1.170-1.170 3.070-1.170 4.240 0L16.480 9c.39.39.39 1.020 0 1.410zm.7-2.120c.78.78.78 2.050 0 2.830-1.270 1.270-2.610.22-2.830 0l-3.760-3.760-5.570 5.570c-.39.39-.39 1.020 0 1.410.39.39 1.020.39 1.420 0l4.620-4.620.71.710-4.620 4.620c-.39.39-.39 1.020 0 1.410.39.39 1.020.39 1.420 0l4.620-4.620.71.710-4.620 4.620c-.39.390-.39 1.020 0 1.410.39.39 1.020.39 1.410 0l4.620-4.620.71.710-4.620 4.620c-.39.39-.39 1.020 0 1.410.39.39 1.020.39 1.410 0l8.320-8.300c1.170-1.170 1.170-3.070 0-4.240l-4.240-4.240c-1.150-1.150-3.010-1.170-4.180-.06l4.470 4.470z"/></svg>
<span id="t58" class="t m" style="left:1358.40px;top:154.00px;font-size:11.65px;line-height:11.65px;color:#bdbdbd;letter-spacing:-0.182px;">Peer</span>
<div class="a" style="left:437px;top:209px;width:995px;height:1px;background:#e0e0e0;"></div>
<div class="a" style="left:461px;top:234px;width:32px;height:24px;background:#e39b52;border-radius:4px;"></div>
<svg class="a" style="left:468.7px;top:237.7px;" width="16.6" height="16.6" viewBox="0 0 24 24"><path fill="#fff" d="M12.36 6l.4 2H18v6h-3.360l-.4-2H7V6h5.360M14 4H5v17h2v-7h5.600l.4 2h7V6h-5.600L14 4z"/></svg>
<span id="t59" class="t" style="left:504.80px;top:238.00px;font-size:16.00px;line-height:16.00px;color:#333;letter-spacing:-0.259px;">Goals</span>
<span id="t60" class="t" style="left:461.40px;top:270.00px;font-size:16.00px;line-height:16.00px;color:#666;letter-spacing:-0.097px;">What goals can you help someone else with?</span>
<div class="chip" style="left:461px;top:298px;width:128.7px;height:30px;"></div>
<span id="t61" class="t m" style="left:470.30px;top:306.00px;font-size:14.00px;line-height:14.00px;color:#1a1a1a;letter-spacing:0.042px;">Learn a new skill</span>
<div class="chip" style="left:598px;top:298px;width:161px;height:30px;"></div>
<span id="t62" class="t m" style="left:607.30px;top:306.00px;font-size:14.00px;line-height:14.00px;color:#1a1a1a;letter-spacing:0.156px;">Build internal network</span>
<div class="chip" style="left:767px;top:298px;width:129.6px;height:30px;"></div>
<span id="t63" class="t m" style="left:776.30px;top:306.00px;font-size:14.00px;line-height:14.00px;color:#1a1a1a;letter-spacing:0.116px;">Bounce ideas off</span>
<div class="chip" style="left:905.2px;top:298px;width:176.5px;height:30px;"></div>
<span id="t64" class="t m" style="left:914.50px;top:306.00px;font-size:14.00px;line-height:14.00px;color:#1a1a1a;letter-spacing:0.206px;">Join company initiatives</span>
<div class="chip" style="left:1090px;top:298px;width:185.7px;height:30px;"></div>
<span id="t65" class="t m" style="left:1099.30px;top:306.00px;font-size:14.00px;line-height:14.00px;color:#1a1a1a;letter-spacing:0.099px;">Improve work-life balance</span>
<div class="chip" style="left:1284px;top:298px;width:109.7px;height:30px;"></div>
<span id="t66" class="t m" style="left:1293.30px;top:306.00px;font-size:14.00px;line-height:14.00px;color:#1a1a1a;letter-spacing:0.033px;">Get promoted</span>
<span id="t67" class="t" style="left:461.40px;top:348.00px;font-size:16.00px;line-height:16.00px;color:#666;letter-spacing:-0.057px;">What goals do you want to work on?</span>
<div class="chip" style="left:461px;top:376px;width:128.7px;height:30px;"></div>
<span id="t68" class="t m" style="left:470.30px;top:384.00px;font-size:14.00px;line-height:14.00px;color:#1a1a1a;letter-spacing:0.042px;">Learn a new skill</span>
<div class="chip" style="left:598px;top:376px;width:161px;height:30px;"></div>
<span id="t69" class="t m" style="left:607.30px;top:384.00px;font-size:14.00px;line-height:14.00px;color:#1a1a1a;letter-spacing:0.156px;">Build internal network</span>
<div class="chip" style="left:767px;top:376px;width:129.6px;height:30px;"></div>
<span id="t70" class="t m" style="left:776.30px;top:384.00px;font-size:14.00px;line-height:14.00px;color:#1a1a1a;letter-spacing:0.116px;">Bounce ideas off</span>
<div class="chip" style="left:905.2px;top:376px;width:176.5px;height:30px;"></div>
<span id="t71" class="t m" style="left:914.50px;top:384.00px;font-size:14.00px;line-height:14.00px;color:#1a1a1a;letter-spacing:0.206px;">Join company initiatives</span>
<div class="chip" style="left:1090px;top:376px;width:185.7px;height:30px;"></div>
<span id="t72" class="t m" style="left:1099.30px;top:384.00px;font-size:14.00px;line-height:14.00px;color:#1a1a1a;letter-spacing:0.099px;">Improve work-life balance</span>
<div class="chip" style="left:1284px;top:376px;width:109.7px;height:30px;"></div>
<span id="t73" class="t m" style="left:1293.30px;top:384.00px;font-size:14.00px;line-height:14.00px;color:#1a1a1a;letter-spacing:0.033px;">Get promoted</span>
<div class="a" style="left:461px;top:438px;width:32px;height:24px;background:#55a05b;border-radius:4px;"></div>
<svg class="a" style="left:468.7px;top:441.7px;" width="16.6" height="16.6" viewBox="0 0 24 24"><path fill="#fff" d="M20.57 14.860L22 13.430 20.570 12 17 15.570 8.430 7 12 3.430 10.570 2 9.140 3.430 7.710 2 5.570 4.140 4.140 2.710 2.710 4.140l1.430 1.430L2 7.710l1.430 1.430L2 10.570 3.430 12 7 8.430 15.570 17 12 20.570 13.430 22l1.430-1.430L16.290 22l2.140-2.140 1.430 1.430 1.430-1.430-1.430-1.430L22 16.290z"/></svg>
<span id="t74" class="t" style="left:504.80px;top:442.00px;font-size:16.00px;line-height:16.00px;color:#333;letter-spacing:-0.007px;">Skills</span>
<span id="t75" class="t" style="left:461.40px;top:474.00px;font-size:16.00px;line-height:16.00px;color:#666;letter-spacing:0.001px;">What soft skills can you help someone with?</span>
<div class="chip" style="left:461px;top:502px;width:102px;height:30px;"></div>
<span id="t76" class="t m" style="left:470.30px;top:510.00px;font-size:14.00px;line-height:14.00px;color:#1a1a1a;letter-spacing:0.044px;">Team Player</span>
<div class="chip" style="left:571.2px;top:502px;width:121.4px;height:30px;"></div>
<span id="t77" class="t m" style="left:580.50px;top:510.00px;font-size:14.00px;line-height:14.00px;color:#1a1a1a;letter-spacing:0.131px;">Approachability</span>
<div class="chip" style="left:701px;top:502px;width:104px;height:30px;"></div>
<span id="t78" class="t m" style="left:710.30px;top:510.00px;font-size:14.00px;line-height:14.00px;color:#1a1a1a;letter-spacing:0.076px;">Organization</span>
<div class="chip" style="left:813.2px;top:502px;width:83.7px;height:30px;"></div>
<span id="t79" class="t m" style="left:822.50px;top:510.00px;font-size:14.00px;line-height:14.00px;color:#1a1a1a;letter-spacing:0.164px;">Creativity</span>
<div class="chip" style="left:905.1px;top:502px;width:78.6px;height:30px;"></div>
<span id="t80" class="t m" style="left:914.40px;top:510.00px;font-size:14.00px;line-height:14.00px;color:#1a1a1a;letter-spacing:0.136px;">Diversity</span>
<div class="chip" style="left:991.9px;top:502px;width:113.8px;height:30px;"></div>
<span id="t81" class="t m" style="left:1001.20px;top:510.00px;font-size:14.00px;line-height:14.00px;color:#1a1a1a;letter-spacing:0.166px;">Team Building</span>
<div class="chip" style="left:1114.3px;top:502px;width:114.6px;height:30px;"></div>
<span id="t82" class="t m" style="left:1123.60px;top:510.00px;font-size:14.00px;line-height:14.00px;color:#1a1a1a;letter-spacing:0.102px;">Driving Impact</span>
<span id="t83" class="t" style="left:461.40px;top:552.00px;font-size:16.00px;line-height:16.00px;color:#666;letter-spacing:0.011px;">What soft skills do you want to work on?</span>
<div class="chip" style="left:461px;top:580px;width:102px;height:30px;"></div>
<span id="t84" class="t m" style="left:470.30px;top:588.00px;font-size:14.00px;line-height:14.00px;color:#1a1a1a;letter-spacing:0.044px;">Team Player</span>
<div class="chip" style="left:571.2px;top:580px;width:121.4px;height:30px;"></div>
<span id="t85" class="t m" style="left:580.50px;top:588.00px;font-size:14.00px;line-height:14.00px;color:#1a1a1a;letter-spacing:0.131px;">Approachability</span>
<div class="chip" style="left:701px;top:580px;width:104px;height:30px;"></div>
<span id="t86" class="t m" style="left:710.30px;top:588.00px;font-size:14.00px;line-height:14.00px;color:#1a1a1a;letter-spacing:0.076px;">Organization</span>
<div class="chip" style="left:813.2px;top:580px;width:83.7px;height:30px;"></div>
<span id="t87" class="t m" style="left:822.50px;top:588.00px;font-size:14.00px;line-height:14.00px;color:#1a1a1a;letter-spacing:0.164px;">Creativity</span>
<div class="chip" style="left:905.1px;top:580px;width:78.6px;height:30px;"></div>
<span id="t88" class="t m" style="left:914.40px;top:588.00px;font-size:14.00px;line-height:14.00px;color:#1a1a1a;letter-spacing:0.136px;">Diversity</span>
<div class="chip" style="left:991.9px;top:580px;width:113.8px;height:30px;"></div>
<span id="t89" class="t m" style="left:1001.20px;top:588.00px;font-size:14.00px;line-height:14.00px;color:#1a1a1a;letter-spacing:0.166px;">Team Building</span>
<div class="chip" style="left:1114.3px;top:580px;width:114.6px;height:30px;"></div>
<span id="t90" class="t m" style="left:1123.60px;top:588.00px;font-size:14.00px;line-height:14.00px;color:#1a1a1a;letter-spacing:0.102px;">Driving Impact</span>
<div class="a" style="left:461px;top:642px;width:34px;height:24px;background:#227f7f;border-radius:4px;"></div>
<svg class="a" style="left:469.7px;top:645.7px;" width="16.6" height="16.6" viewBox="0 0 24 24"><path fill="#fff" d="M12 2C8.13 2 5 5.130 5 9c0 5.250 7 13 7 13s7-7.750 7-13c0-3.870-3.130-7-7-7zm0 9.500c-1.380 0-2.500-1.120-2.500-2.500s1.120-2.500 2.500-2.500 2.500 1.120 2.500 2.500-1.120 2.500-2.500 2.500z"/></svg>
<span id="t91" class="t" style="left:506.80px;top:646.00px;font-size:16.00px;line-height:16.00px;color:#333;letter-spacing:0.188px;">Location</span>
<span id="t92" class="t" style="left:461.40px;top:678.00px;font-size:16.00px;line-height:16.00px;color:#666;letter-spacing:-0.244px;">Where are you located?</span>
<div class="chip" style="left:461px;top:706px;width:67.7px;height:23px;border-radius:4px 4px 0 0;"></div>
<span id="t93" class="t m" style="left:470.30px;top:714.00px;font-size:14.00px;line-height:14.00px;color:#1a1a1a;letter-spacing:0.058px;">Seattle</span>
<div class="a" style="left:437px;top:729px;width:995px;height:78px;background:#fff;"></div>
<div class="a" style="left:443px;top:732px;width:989px;height:1px;background:#dedede;"></div>
<div class="a" style="left:467px;top:756px;width:185px;height:32px;background:#fff;border:1px solid #2467c2;border-radius:4px;"></div>
<svg class="a" style="left:483.1px;top:764.2px;" width="16" height="16" viewBox="0 0 24 24"><path fill="#1e63c0" d="M20 11H7.830l5.590-5.590L12 4l-8 8 8 8 1.410-1.410L7.830 13H20v-2z"/></svg>
<span id="t94" class="t m" style="left:506.80px;top:765.00px;font-size:14.00px;line-height:14.00px;color:#1e63c0;letter-spacing:0.267px;">Previous Applicant</span>
<div class="a" style="left:668px;top:756px;width:159px;height:32px;background:#fff;border:1px solid #2467c2;border-radius:4px;"></div>
<span id="t95" class="t m" style="left:683.80px;top:765.00px;font-size:14.35px;line-height:14.35px;color:#1e63c0;letter-spacing:0.161px;">Next Applicant</span>
<svg class="a" style="left:795px;top:764.2px;" width="16" height="16" viewBox="0 0 24 24"><path fill="#1e63c0" d="M12 4l-1.410 1.410L16.170 11H4v2h12.170l-5.580 5.590L12 20l8-8z"/></svg>
<div class="a" style="left:1124px;top:756px;width:64px;height:32px;background:#fff;border:1px solid #c93535;border-radius:4px;"></div>
<span id="t96" class="t m" style="left:1140.00px;top:765.00px;font-size:14.00px;line-height:14.00px;color:#c62828;letter-spacing:-0.322px;">Deny</span>
<div class="a" style="left:1204px;top:756px;width:81px;height:32px;background:#fff;border:1px solid #2467c2;border-radius:4px;"></div>
<span id="t97" class="t m" style="left:1219.60px;top:765.00px;font-size:14.53px;line-height:14.53px;color:#1e63c0;letter-spacing:0.213px;">Waitlist</span>
<div class="a" style="left:1301px;top:756px;width:118.3px;height:32px;background:#1d66bf;border-radius:4px;"></div>
<span id="t98" class="t" style="left:1317.60px;top:765.00px;font-size:14.00px;line-height:14.00px;color:#fff;letter-spacing:0.021px;-webkit-text-stroke:0.3px #fff;">Approve</span>
<svg class="a" style="left:1386.9px;top:763.6px;" width="16" height="16" viewBox="0 0 24 24"><path fill="#fff" d="M7 10l5 5 5-5z"/></svg>
<div class="a" style="left:1201px;top:654px;width:220px;height:88px;background:#fff;border-radius:4px;box-shadow:0 5px 5px -3px rgba(0,0,0,.16),0 8px 10px 1px rgba(0,0,0,.10),0 3px 14px 2px rgba(0,0,0,.09);"></div>
<span id="t99" class="t" style="left:1217.10px;top:672.00px;font-size:16.00px;line-height:16.00px;color:#212121;letter-spacing:0.092px;">Approve as Mentor only</span>
<span id="t100" class="t" style="left:1217.10px;top:708.00px;font-size:16.00px;line-height:16.00px;color:#212121;letter-spacing:0.034px;">Approve as Mentee only</span>
<div class="a" style="left:1174px;top:641px;width:253px;height:155px;background:transparent;border:5px solid #f9a13e;"></div>
</section>
</div>
</body></html>
